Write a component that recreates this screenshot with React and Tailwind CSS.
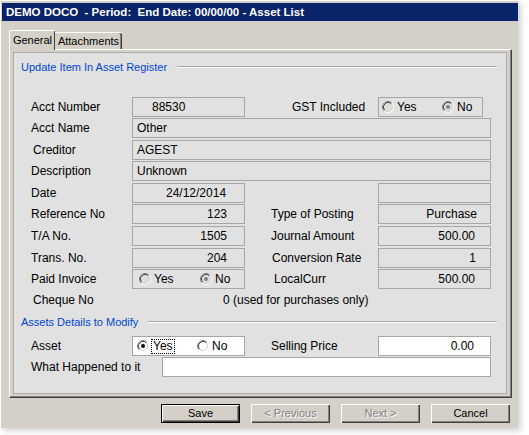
import React from "react";

const Radio = ({ checked, disabled }) => {
  const fill = disabled ? "#dedede" : "#ffffff";
  return (
    <svg width="12" height="12" viewBox="0 0 12 12" className="shrink-0">
      <circle cx="6" cy="6" r="5" fill={fill} />
      <path d="M2.11 9.89A5.5 5.5 0 0 1 9.89 2.11" stroke="#808080" fill="none" />
      <path d="M9.89 2.11A5.5 5.5 0 0 1 2.11 9.89" stroke="#ffffff" fill="none" />
      <path d="M2.82 9.18A4.5 4.5 0 0 1 9.18 2.82" stroke="#404040" fill="none" />
      <path d="M9.18 2.82A4.5 4.5 0 0 1 2.82 9.18" stroke="#d4d0c8" fill="none" />
      {checked && <circle cx="6" cy="6" r="2" fill={disabled ? "#808080" : "#000000"} />}
    </svg>
  );
};

const Heading = ({ text, className }) => (
  <div className={"flex items-center h-[14px] pl-[7px] pr-[9px] gap-[10px] " + className}>
    <span className="text-[11px] text-[#0046d5] whitespace-nowrap">{text}</span>
    <div className="flex-1 h-[2px] border-t border-[#a8a8a8] border-b border-b-white" />
  </div>
);

const Box = ({ className = "", children }) => (
  <div
    className={
      "h-[20px] border border-[#a6a6a6] flex items-center text-[12px] text-black whitespace-nowrap " +
      className
    }
  >
    {children}
  </div>
);

const Label = ({ className = "", children }) => (
  <div className={"text-[12px] text-black whitespace-nowrap " + className}>{children}</div>
);

const Row = ({ className = "", children }) => (
  <div className={"flex items-center h-[20px] pl-[17px] " + className}>{children}</div>
);

const Button = ({ children, primary, disabled }) => (
  <div
    className={
      "w-[79px] h-[19px] flex items-center justify-center text-[11px] bg-[#d4d0c8] shadow-[inset_1px_1px_0_#ffffff,inset_-1px_-1px_0_#404040,inset_-2px_-2px_0_#808080] " +
      (primary ? "border border-black " : "") +
      (disabled ? "text-[#808080] [text-shadow:1px_1px_0_#ffffff]" : "text-black")
    }
  >
    {children}
  </div>
);

export default function App() {
  return (
    <div className="w-[529px] h-[435px] bg-white font-['Liberation_Sans',Arial,sans-serif]">
      <div className="w-[518px] h-[428px] bg-[#d4d0c8] pt-[3px] shadow-[inset_1px_1px_0_#ffffff,3px_3px_6px_rgba(0,0,0,0.18)]">
        <div className="ml-[2px] h-[18px] bg-[#0a246a] pl-[4px] text-white font-bold text-[11.5px] leading-[18px] whitespace-pre">
          {"DEMO DOCO  - Period:  End Date: 00/00/00 - Asset List"}
        </div>

        <div className="mt-[9px] ml-[9px] flex items-end">
          <div className="relative z-10 -mb-[1px] w-[46px] h-[20px] bg-[#d4d0c8] border-t border-l border-white rounded-tl-[2px] shadow-[inset_-1px_0_0_#404040] flex items-center justify-center text-[11px] text-black">
            General
          </div>
          <div className="w-[67px] h-[17px] bg-[#d4d0c8] border-t border-white rounded-tr-[2px] shadow-[inset_-1px_0_0_#404040,inset_-2px_0_0_#808080] flex items-center justify-center text-[11px] text-black">
            Attachments
          </div>
        </div>

        <div className="ml-[9px] w-[503px] h-[349px] border-t border-l border-white border-r border-b border-r-[#404040] border-b-[#404040] shadow-[inset_-1px_-1px_0_#808080] pt-[2px] pl-[3px]">
          <div className="w-[494px] h-[342px] bg-[#e1e1e1] border border-[#ababab] flex flex-col">
            <Heading text="Update Item In Asset Register" className="mt-[7px]" />

            <Row className="mt-[23px]">
              <Label className="w-[101px]">Acct Number</Label>
              <Box className="w-[113px] pl-[19px]">88530</Box>
              <Label className="ml-[47px] w-[86px]">GST Included</Label>
              <Box className="w-[105px] pl-[3px]">
                <div className="flex items-center w-[60px] gap-[3px]">
                  <Radio disabled />
                  <span>Yes</span>
                </div>
                <div className="flex items-center gap-[3px]">
                  <Radio disabled checked />
                  <span>No</span>
                </div>
              </Box>
            </Row>

            <Row className="mt-[1px]">
              <Label className="w-[101px]">Acct Name</Label>
              <Box className="w-[359px] pl-[4px]">Other</Box>
            </Row>

            <Row className="mt-[2px]">
              <Label className="w-[101px] pl-[2px]">Creditor</Label>
              <Box className="w-[359px] pl-[4px]">AGEST</Box>
            </Row>

            <Row className="mt-[1px]">
              <Label className="w-[101px]">Description</Label>
              <Box className="w-[359px] pl-[4px]">Unknown</Box>
            </Row>

            <Row className="mt-[2px]">
              <Label className="w-[101px]">Date</Label>
              <Box className="w-[113px] pl-[33px]">24/12/2014</Box>
              <div className="w-[133px]" />
              <Box className="w-[113px]" />
            </Row>

            <Row className="mt-[1px]">
              <Label className="w-[101px]">Reference No</Label>
              <Box className="w-[113px] justify-end pr-[17px]">123</Box>
              <Label className="ml-[26px] w-[107px]">Type of Posting</Label>
              <Box className="w-[113px] justify-end pr-[13px]">Purchase</Box>
            </Row>

            <Row className="mt-[2px]">
              <Label className="w-[101px]">T/A No.</Label>
              <Box className="w-[113px] justify-end pr-[17px]">1505</Box>
              <Label className="ml-[26px] w-[107px]">Journal Amount</Label>
              <Box className="w-[113px] justify-end pr-[15px]">500.00</Box>
            </Row>

            <Row className="mt-[2px]">
              <Label className="w-[101px]">Trans. No.</Label>
              <Box className="w-[113px] justify-end pr-[17px]">204</Box>
              <Label className="ml-[26px] w-[107px] pl-[1px]">Conversion Rate</Label>
              <Box className="w-[113px] justify-end pr-[14px]">1</Box>
            </Row>

            <Row className="mt-[1px]">
              <Label className="w-[101px]">Paid Invoice</Label>
              <Box className="w-[113px] pl-[6px]">
                <div className="flex items-center w-[61px] gap-[3px]">
                  <Radio disabled />
                  <span>Yes</span>
                </div>
                <div className="flex items-center gap-[3px]">
                  <Radio disabled checked />
                  <span>No</span>
                </div>
              </Box>
              <Label className="ml-[26px] w-[107px] pl-[3px]">LocalCurr</Label>
              <Box className="w-[113px] justify-end pr-[15px]">500.00</Box>
            </Row>

            <Row className="mt-[1px]">
              <Label className="w-[101px] pl-[2px]">Cheque No</Label>
              <Label className="ml-[91px]">0 (used for purchases only)</Label>
            </Row>

            <Heading text="Assets Details to Modify" className="mt-[5px]" />

            <Row className="mt-[7px]">
              <Label className="w-[101px]">Asset</Label>
              <Box className="w-[113px] pl-[4px] bg-white">
                <div className="flex items-center w-[60px] gap-[2px]">
                  <Radio checked />
                  <span className="border border-dotted border-black px-[1px] leading-[13px]">Yes</span>
                </div>
                <div className="flex items-center gap-[3px]">
                  <Radio />
                  <span>No</span>
                </div>
              </Box>
              <Label className="ml-[26px] w-[107px]">Selling Price</Label>
              <Box className="w-[113px] justify-end pr-[16px] bg-white">0.00</Box>
            </Row>

            <Row className="mt-[1px]">
              <Label className="w-[131px]">What Happened to it</Label>
              <Box className="w-[329px] bg-white" />
            </Row>
          </div>
        </div>

        <div className="mt-[6px] pl-[161px] flex gap-[11px]">
          <Button primary>Save</Button>
          <Button disabled>&lt; Previous</Button>
          <Button disabled>Next &gt;</Button>
          <Button>Cancel</Button>
        </div>
      </div>
    </div>
  );
}
